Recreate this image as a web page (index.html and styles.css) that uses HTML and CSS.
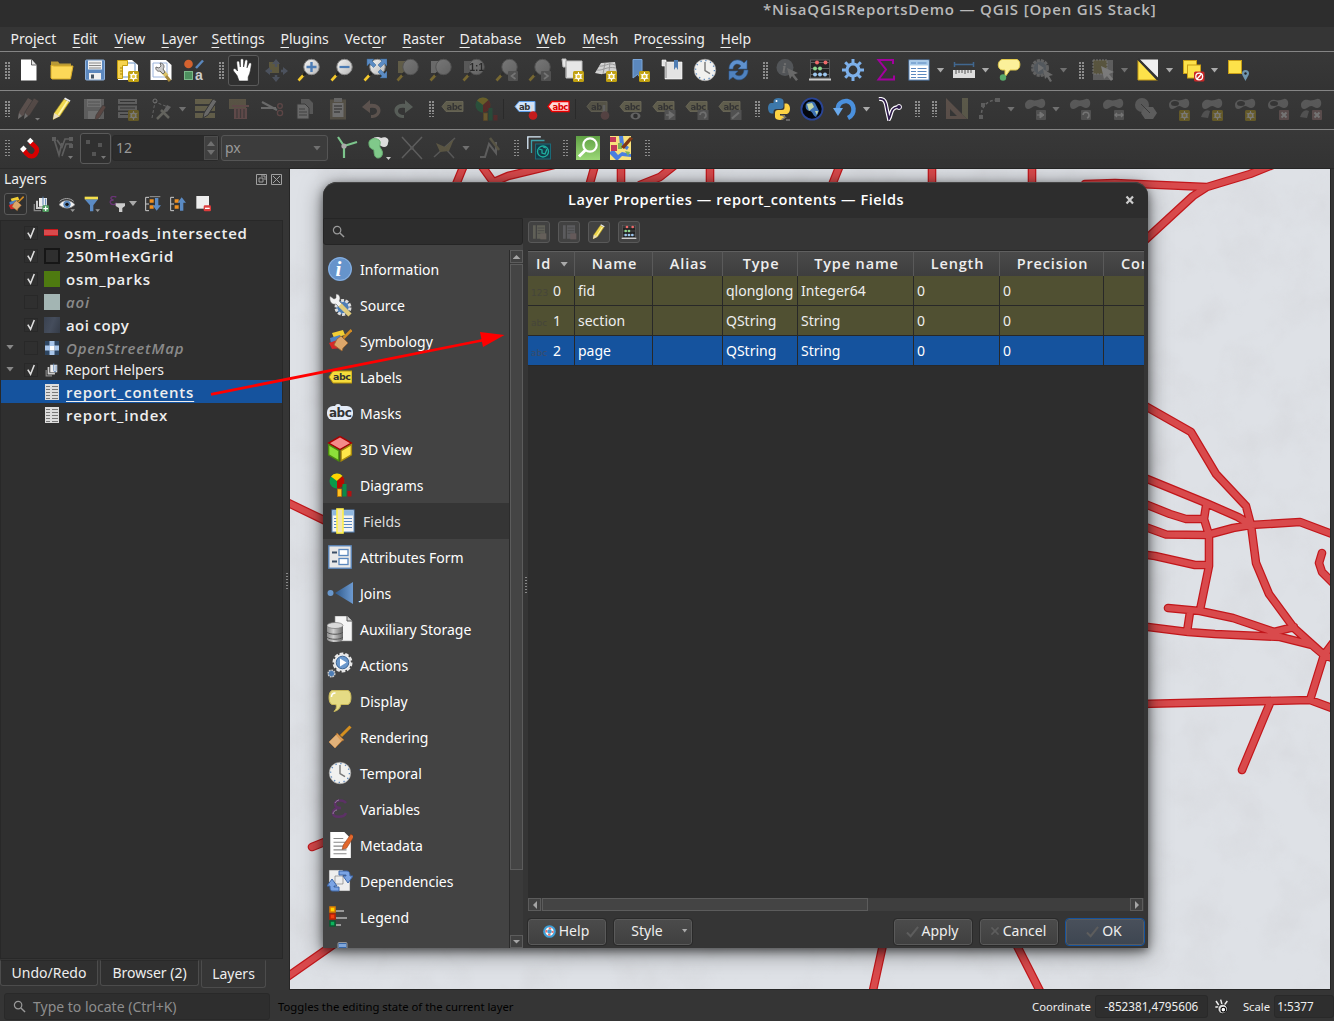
FILE: index.html
```html
<!DOCTYPE html>
<html lang="en">
<head>
<meta charset="utf-8">
<title>*NisaQGISReportsDemo — QGIS [Open GIS Stack]</title>
<link rel="stylesheet" href="styles.css">
</head>
<body>
<svg class="sprite" aria-hidden="true">
<defs>
<linearGradient id="gBall" x1="0" y1="0" x2="1" y2="1"><stop offset="0" stop-color="#f4f4f4"/><stop offset="1" stop-color="#b9b9b9"/></linearGradient>
<linearGradient id="gBlue" x1="0" y1="0" x2="1" y2="0"><stop offset="0" stop-color="#2f5a8c"/><stop offset="1" stop-color="#6d9ad0"/></linearGradient>
<linearGradient id="gDb" x1="0" y1="0" x2="1" y2="0"><stop offset="0" stop-color="#8b8b8b"/><stop offset=".4" stop-color="#cfcfcf"/><stop offset="1" stop-color="#666"/></linearGradient>
<linearGradient id="gGreen" x1="0" y1="0" x2="0" y2="1"><stop offset="0" stop-color="#5fa044"/><stop offset="1" stop-color="#9bd877"/></linearGradient>
<g id="star"><rect x="12" y="13" width="11" height="11" rx="1.5" fill="#c0a010"/><path d="M17.500 14v9M13.600 16.200l7.800 4.600M21.400 16.200l-7.800 4.600" stroke="#fff" stroke-width="1"/><circle cx="17.500" cy="18.500" r="2.400" fill="#e7c940" stroke="#fff" stroke-width="1.300"/></g>
<g id="lens"><path d="M1.500 22.500l5.500-6" stroke="#f5c92c" stroke-width="2.600"/><path d="M6 17.500l3-3" stroke="#222" stroke-width="2.600"/><circle cx="14.500" cy="9" r="7.700" fill="url(#gBall)" stroke="#8a8a8a"/></g>
<g id="tag"><path d="M1 9.500l4-5h17v10H5z" fill="#b0a878" stroke="#d8d0a0" stroke-width=".8"/><text x="5.500" y="12.800" font-size="8.500" class="abc">abc</text></g>
<g id="badge"><rect x="13" y="13" width="10" height="10" rx="1" fill="#888"/></g>
<g id="blob"><path d="M2 8c0-4 4-6 7-5s6 0 9-1 5 3 4 6-4 4-7 2-4-1-7 1-6 1-6-3z" fill="#9a9a9a"/></g>
</defs>
<symbol id="new" viewBox="0 0 24 24"><path d="M4 1.500h10.500l5 5.500v15.500H4z" fill="#fff"/><path d="M14.500 1.500v5.500h5" fill="#e2e2e2" stroke="#444" stroke-width=".8"/></symbol>
<symbol id="open" viewBox="0 0 24 24"><path d="M1 3.500h7l1.500 2H21V9H1z" fill="#b99a35"/><path d="M1 20V7l3 1h19l-2.500 13H2z" fill="#fcd858" stroke="#d9ad28"/></symbol>
<symbol id="save" viewBox="0 0 24 24"><rect x="2.500" y="2" width="19" height="20" rx="1" fill="#5c88be" stroke="#8fb0d8"/><rect x="5" y="2.500" width="14" height="9" fill="#f0f0f0"/><path d="M6 5h12M6 7.500h12M6 10h12" stroke="#888"/><rect x="6" y="15" width="12" height="6.500" fill="#f0f0f0"/><rect x="8" y="16.500" width="3" height="4" fill="#456"/></symbol>
<symbol id="layout" viewBox="0 0 24 24"><path d="M2 2h14l6 5v15H2z" fill="#fff"/><path d="M5 5h14v14H5z" fill="none" stroke="#6a93c5"/><path d="M1.500 2.500h10v5H6.500v13h-5z" fill="#f6d34f" stroke="#c39d10"/><path d="M4 10h2.500M4 13h2.500M4 16h2.500" stroke="#a88510"/><use href="#star"/></symbol>
<symbol id="manager" viewBox="0 0 24 24"><path d="M1.500 2H17l5.500 5v15h-21z" fill="#fff"/><path d="M4 5h14v14H4z" fill="none" stroke="#9ab3dc"/><path d="M12 12l6 6" stroke="#d9c168" stroke-width="4"/><path d="M7 9l3 1 2-2-1-3c4 0 5 4 3 6l2 3-2 2-3-3c-2 1-5-1-4-4z" fill="#ccc" stroke="#555" stroke-width=".8"/><path d="M17 18l4 5" stroke="#a7893a" stroke-width="3"/></symbol>
<symbol id="stylemgr" viewBox="0 0 24 24"><circle cx="6.500" cy="6" r="4.300" fill="#d4622f"/><path d="M14 10l7-7.500" stroke="#5b88be" stroke-width="2.500"/><rect x="2.500" y="13.500" width="8" height="8" fill="#4d8f5e" stroke="#7cb98a"/><text x="13" y="22" font-size="14" fill="#ccc" class="sans-b">a</text></symbol>
<symbol id="hand" viewBox="0 0 24 24"><path d="M8 23L6 17.500 2.500 13c-1.200-2 1-3.500 2.700-1.600L6.500 13 5.700 4.800c-.2-2.300 2.500-2.500 2.900-.2L9.300 9l.1-6.500c0-2.400 3.100-2.400 3.200 0V9l1.200-5.800c.5-2.200 3.100-1.700 2.900.4L16 9.800l1.700-4c.8-1.900 3.100-1.200 2.700.9-.6 3-.8 8-3.200 12.300V23z" fill="#fff" stroke="#222" stroke-width=".6"/></symbol>
<symbol id="panto" viewBox="0 0 24 24"><path d="M5 4h10v11H5z" fill="#a99a50"/><path d="M12 5v4M12 17v3M4 13h4M17 13h4" stroke="#78a" stroke-width="2.500"/><path d="M12 1l4 5H8zM12 24l4-5H8zM1 13l5-4v8zM24 13l-5-4v8z" fill="#78a"/></symbol>
<symbol id="zin" viewBox="0 0 24 24"><use href="#lens"/><path d="M14.500 4v10M9.500 9h10" stroke="#4c7cb5" stroke-width="2.400"/></symbol>
<symbol id="zout" viewBox="0 0 24 24"><use href="#lens"/><path d="M9.500 9h10" stroke="#4c7cb5" stroke-width="2.200"/></symbol>
<symbol id="zfull" viewBox="0 0 24 24"><use href="#lens"/><path d="M4 1h7L9 3l4 4-2.500 2.500-4-4L4 8zM24 1h-7l2 2-4 4 2.500 2.500 4-4L24 8zM24 20h-7l2-2-4-4 2.500-2.500 4 4L24 13z" fill="#5b8bc4" stroke="#35628f" stroke-width=".5"/></symbol>
<symbol id="zsel" viewBox="0 0 24 24"><rect x="2" y="3" width="10" height="12" fill="#b3a568"/><use href="#lens"/></symbol>
<symbol id="zlay" viewBox="0 0 24 24"><rect x="2" y="3" width="10" height="12" fill="#ccc"/><use href="#lens"/></symbol>
<symbol id="znat" viewBox="0 0 24 24"><rect x="2" y="3" width="12" height="12" fill="#999"/><use href="#lens"/><text x="7.500" y="12.500" font-size="10" class="sans-b" fill="#111">1:1</text></symbol>
<symbol id="zlast" viewBox="0 0 24 24"><use href="#lens"/><use href="#badge"/><path d="M20.500 15l-4 3 4 3" fill="none" stroke="#eee" stroke-width="1.600"/></symbol>
<symbol id="znext" viewBox="0 0 24 24"><use href="#lens"/><use href="#badge"/><path d="M16 15l4 3-4 3" fill="none" stroke="#eee" stroke-width="1.600"/></symbol>
<symbol id="map" viewBox="0 0 24 24"><path d="M1 1h4v2h16v17H5V9H2z" fill="#e6e6e6" stroke="#bcbcbc"/><path d="M5 3v16" stroke="#999"/><use href="#star"/></symbol>
<symbol id="map3d" viewBox="0 0 24 24"><path d="M1 15L7 5l14-1 2 11c-7-3-12 2-17 1z" fill="#d2d2d2"/><path d="M3 12c6 1 9-4 19-2M5 8c6 1 9-4 16-1M11 5L9 16M16 4l-1 10" stroke="#999" fill="none"/><use href="#star"/></symbol>
<symbol id="bmnew" viewBox="0 0 24 24"><path d="M6 1.500h9v20l-4.500-5L6 20z" fill="#5b88be" stroke="#7ba6da"/><use href="#star"/></symbol>
<symbol id="bm" viewBox="0 0 24 24"><path d="M2 2h4v2h16v17H5V8H2z" fill="#e3e3e3" stroke="#fff" stroke-width=".6"/><path d="M6 4v16" stroke="#888"/><path d="M14 2h4v10l-2-3-2 3z" fill="#4f7db3"/></symbol>
<symbol id="clock" viewBox="0 0 24 24"><circle cx="12" cy="12" r="10.800" fill="#f1f1ef" stroke="#999" stroke-width=".6"/><circle cx="12" cy="12" r="9.400" fill="none" stroke="#5b88be" stroke-width="1.300" stroke-dasharray="1.300 3.620"/><path d="M12 4v8.500l5 3.200" fill="none" stroke="#777" stroke-width="1.400"/></symbol>
<symbol id="refresh" viewBox="0 0 24 24"><path d="M3 11C3 2 13-1 18 5l3-3v9h-9l3-3c-4-4-8-1-8 3z" fill="#5f92cf" stroke="#2f5d93" stroke-width=".6"/><path d="M22 12c0 9-10 13-15 7l-4 3v-9h9l-3 3c4 4 9 1 9-4z" fill="#4f82bf" stroke="#2f5d93" stroke-width=".6"/></symbol>
<symbol id="ident" viewBox="0 0 24 24"><circle cx="10" cy="9.500" r="8.500" fill="#8a9199"/><text x="7" y="15" font-size="15" class="serif-bi" fill="#ddd">i</text><path d="M12 10l11 5-4 1.500 4 5-2 1.500-4-5-2 3z" fill="#ccc"/></symbol>
<symbol id="abacus" viewBox="0 0 24 24"><rect x="2.500" y="2" width="19" height="18" fill="#242424" stroke="#666" stroke-width=".8"/><path d="M1 21.500h22" stroke="#ccc" stroke-width="2"/><path d="M3 4.500h18M3 10.500h18M3 16.500h18" stroke="#999" stroke-width=".5"/><g fill="#f06a6a"><circle cx="9" cy="4.500" r="2"/><circle cx="17.500" cy="4.500" r="2"/></g><g fill="#8fd98f"><circle cx="7" cy="10.500" r="2"/><circle cx="12" cy="10.500" r="2"/></g><g fill="#9cc6ef"><circle cx="7" cy="16.500" r="2"/><circle cx="12" cy="16.500" r="2"/><circle cx="17" cy="16.500" r="2"/></g></symbol>
<symbol id="gear" viewBox="0 0 24 24"><path d="M12 1v22M1 12h22M4.200 4.200l15.600 15.600M19.800 4.200L4.200 19.800" stroke="#7db0ea" stroke-width="3"/><circle cx="12" cy="12" r="6" fill="#353535" stroke="#7db0ea" stroke-width="3.200"/></symbol>
<symbol id="sigma" viewBox="0 0 24 24"><path d="M19 6V2H4.500l7.500 9.500-7.500 10H20v-4" fill="none" stroke="#a3009f" stroke-width="2"/></symbol>
<symbol id="tbl" viewBox="0 0 24 24"><rect x="2" y="2" width="20" height="20" fill="#fff" stroke="#5b88be"/><rect x="2.500" y="2.500" width="19" height="5" fill="#a8cbea"/><path d="M4 5h5M10.500 5h9M4 10.500h5M10.500 10.500h9M4 13.500h5M10.500 13.500h9M4 16.500h5M10.500 16.500h9M4 19.500h5M10.500 19.500h9" stroke="#5b88be" stroke-width="1.100"/></symbol>
<symbol id="ruler" viewBox="0 0 24 24"><path d="M2 6.500h20M2.500 4v5M21.500 4v5" stroke="#41678f" stroke-width="1.500"/><rect x="1" y="12" width="22" height="8" fill="#ddd"/><path d="M4 12v4M7 12v3M10 12v3M13 12v4M16 12v3M19 12v3" stroke="#555"/></symbol>
<symbol id="tip" viewBox="0 0 24 24"><path d="M5 1.500h15c4 1 4 10-1 10.500h-6L8 19v-7H5C0 11 0 3 5 1.500z" fill="#fbf09a" stroke="#e0c94e"/><circle cx="6" cy="19.500" r="3.200" fill="#58a86a"/></symbol>
<symbol id="action" viewBox="0 0 24 24"><circle cx="10" cy="10" r="7.500" fill="#8b99a8" stroke="#b5b5b5" stroke-width="3" stroke-dasharray="3 1"/><path d="M8 6l6 4-6 4z" fill="#ddd"/><path d="M13 11l10 6-4 1 3 5-2 1-3-5-2 2z" fill="#ccc"/></symbol>
<symbol id="selrect" viewBox="0 0 24 24"><rect x="2" y="2" width="20" height="20" fill="#aaa"/><rect x="2" y="2" width="14" height="14" fill="#9a8f50" stroke="#eee" stroke-dasharray="2 1"/><path d="M10 8l13 6-5 2 4 5-2 2-4-5-3 3z" fill="#fff"/></symbol>
<symbol id="invert" viewBox="0 0 24 24"><path d="M2 2v20h20z" fill="#fde24a" stroke="#c89e16"/><path d="M4 1.500h18v18z" fill="#eee"/><path d="M2 1l20 21" stroke="#333" stroke-width="2"/></symbol>
<symbol id="desel" viewBox="0 0 24 24"><rect x="2.500" y="2.500" width="13" height="13" fill="#fde24a" stroke="#c89e16"/><rect x="6.500" y="7" width="13" height="13" fill="#fde24a" stroke="#c89e16"/><rect x="13" y="13.500" width="10.500" height="10" rx="1.500" fill="#c92626"/><circle cx="18.200" cy="18.500" r="3.400" fill="none" stroke="#fff" stroke-width="1.300"/><path d="M16 21l4.500-5" stroke="#fff" stroke-width="1.300"/></symbol>
<symbol id="selloc" viewBox="0 0 24 24"><rect x="2.500" y="2.500" width="13" height="13" fill="#fde24a" stroke="#c89e16"/><path d="M19.500 23c-2.500-5-3.500-6-3.500-7.500a3.500 3.500 0 0 1 7 0c0 1.500-1 2.500-3.500 7.500z" fill="#6f95ad"/><circle cx="19.500" cy="15.500" r="1.200" fill="#222"/></symbol>
<symbol id="pencil" viewBox="0 0 24 24"><path d="M3 22.500l1.200-6.500L14 2l5.500 3-9.500 14z" fill="#f0d84e" stroke="#8d7a20" stroke-width=".6"/><path d="M8.500 18L17.500 4" stroke="#fff6b0" stroke-width="1.500"/><path d="M3 22.500l1.200-6.500 5.500 3.200z" fill="#e8dcc0"/><path d="M14 2l1-1.500L20.500 3.500l-1 1.500z" fill="#eee"/></symbol>
<symbol id="pencils" viewBox="0 0 24 24"><path d="M1 22l1-7L11 1l5 3-9 14z" fill="#a08078"/><path d="M7 22l1-7L17 1l5 3-9 14z" fill="#8d6f66" stroke="#333" stroke-width=".6"/><path d="M1 22l1-6 3 3zM7 22l1-6 3 3z" fill="#ddd"/><path d="M18 21h5l-2.500 2.500z" fill="#fff"/></symbol>
<symbol id="saveed" viewBox="0 0 24 24"><path d="M1 2h20v20H1z" fill="#aaa"/><path d="M4 2h14v8H4zM5 14h12v8H5z" fill="#ddd"/><path d="M5 5h12M5 8h12" stroke="#888"/><path d="M12 23l1-5 7-10 3 2-7 11z" fill="#a0685c" stroke="#333" stroke-width=".5"/></symbol>
<symbol id="addrec" viewBox="0 0 24 24"><path d="M2 2h19v5H2zM2 8.500h19v5H2zM2 15h19v6H2z" fill="#aaa"/><path d="M4 4.500h15M4 11h15M4 17.500h15" stroke="#333"/><use href="#star"/></symbol>
<symbol id="vertex" viewBox="0 0 24 24"><path d="M3 21L6 5l13 5" fill="none" stroke="#bbb" stroke-dasharray="3 2"/><circle cx="6" cy="4" r="2" fill="none" stroke="#ddd"/><path d="M8 22l9-9M12 13l8 8" stroke="#bba" stroke-width="2.500"/><path d="M15 13l3-5 4 2-4 5z" fill="#bbb"/></symbol>
<symbol id="multiedit" viewBox="0 0 24 24"><path d="M1 2h20v5H1zM1 9h20v5H1zM1 16h20v5H1z" fill="#b7ab70"/><path d="M9 21l1-5L19 2l4 2-9 14z" fill="#ccc" stroke="#333"/></symbol>
<symbol id="del" viewBox="0 0 24 24"><path d="M2 2h17v10H2z" fill="#9a8a60"/><path d="M5 8h17v2H5zM7 11h13v11H7z" fill="#b07070"/><path d="M10 12v9M13.500 12v9M17 12v9" stroke="#544" stroke-width="1.300"/></symbol>
<symbol id="cut" viewBox="0 0 24 24"><path d="M2 5l15 8M1 11h15" stroke="#ccc" stroke-width="2"/><circle cx="20" cy="16" r="2.600" fill="none" stroke="#a66" stroke-width="1.300"/><circle cx="20" cy="9" r="2.300" fill="none" stroke="#a66" stroke-width="1.300"/></symbol>
<symbol id="copy" viewBox="0 0 24 24"><path d="M8 2h8l4 4v11H8z" fill="#999"/><path d="M4 7h8l4 4v11H4z" fill="#ccc" stroke="#444"/><path d="M6 12h6M6 15h8M6 18h8" stroke="#555"/></symbol>
<symbol id="paste" viewBox="0 0 24 24"><rect x="4" y="2.500" width="16" height="20" fill="#8d8064"/><path d="M6.500 6h11v14h-11z" fill="#ddd"/><rect x="8" y="1" width="8" height="4" fill="#bbb"/><path d="M8 9h8M8 12h8M8 15h6" stroke="#555" stroke-width="1.300"/></symbol>
<symbol id="undo" viewBox="0 0 24 24"><path d="M3 10l8-7v4c8-1 12 4 10 9-2 4-5 5-9 5v-3c4 0 6-2 6-4 0-3-3-4-7-3v5z" fill="#a58a7c"/></symbol>
<symbol id="redo" viewBox="0 0 24 24"><path d="M21 10l-8-7v4C5 6 1 11 3 16c2 4 5 5 9 5v-3c-4 0-6-2-6-4 0-3 3-4 7-3v5z" fill="#9aab9c"/></symbol>
<symbol id="tag0" viewBox="0 0 24 24"><use href="#tag"/></symbol>
<symbol id="diag" viewBox="0 0 24 24"><circle cx="9" cy="8" r="7.500" fill="#0a9a4a"/><path d="M9 8L3 3.500a7.500 7.500 0 0 1 11.500-.5z" fill="#ffd400"/><path d="M9 8l5.500-5c4 4 2 12-5.500 12.500z" fill="#b90c00"/><rect x="9.500" y="16" width="4" height="7.500" fill="#ffc020" stroke="#c07800" stroke-width=".7"/><rect x="14.500" y="11" width="4" height="12.500" fill="#0c8b47"/><rect x="19.500" y="18" width="4" height="5.500" fill="#b11212"/></symbol>
<symbol id="tagpin" viewBox="0 0 24 24"><path d="M1 9.500l4-5h16v10H5z" fill="#cfe3fb" stroke="#5b9be6"/><text x="5" y="12.800" font-size="8.500" class="abc">ab</text><path d="M18 8v9" stroke="#ddd" stroke-width="2.500"/><circle cx="19" cy="18.500" r="4.300" fill="#c41c1c"/></symbol>
<symbol id="tagpd" viewBox="0 0 24 24"><path d="M1 9.500l4-5h16v10H5z" fill="#b0a878" stroke="#d8d0a0"/><text x="5" y="12.800" font-size="8.500" class="abc">ab</text><path d="M18 8v9" stroke="#ddd" stroke-width="2.500"/><circle cx="19" cy="18.500" r="4.300" fill="#b06a6a"/></symbol>
<symbol id="tagred" viewBox="0 0 24 24"><path d="M1 9.500l4-5h17v10H5z" fill="#ffd9d9" stroke="#e00" stroke-width="1.300"/><text x="5.500" y="12.800" font-size="8.500" class="abc red">abc</text></symbol>
<symbol id="tagb" viewBox="0 0 24 24"><use href="#tag"/><ellipse cx="16.500" cy="19" rx="5" ry="3.500" fill="#bbb"/><circle cx="16.500" cy="19" r="2.300" fill="#222"/></symbol>
<symbol id="tagc" viewBox="0 0 24 24"><use href="#tag"/><rect x="12.500" y="13" width="11" height="10" fill="#888"/><path d="M14 18h5M17.500 15l4 3-4 3z" stroke="#ddd" stroke-width="1.500" fill="#ddd"/></symbol>
<symbol id="tagd" viewBox="0 0 24 24"><use href="#tag"/><rect x="12.500" y="13" width="11" height="10" fill="#888"/><path d="M19 21a3 3 0 1 0-4-3" fill="none" stroke="#ddd" stroke-width="1.600"/></symbol>
<symbol id="tage" viewBox="0 0 24 24"><use href="#tag"/><rect x="12.500" y="13" width="11" height="10" fill="#888"/><path d="M14 21.500l7-6" stroke="#ddd" stroke-width="2.200"/></symbol>
<symbol id="python" viewBox="0 0 24 24"><path d="M6.500 6V4c0-4 10-4 10 0v5c0 2-1 3-3 3h-4c-2 0-3 1-3 3v1.500H4c-4-1-4-10 0-10.500h8" fill="#3d78aa"/><path d="M17.500 6.500H20c4 1 4 9.500 0 10.500h-7v1.500h5V20c0 4-10 4-10 0v-4c0-2 1-3 3-3h4c2 0 2.500-1 2.500-3z" fill="#fdd344"/><circle cx="9.500" cy="4" r="1" fill="#fff"/><path d="M14.500 18l4 2.200-4 2.300M19 23h4" stroke="#777" stroke-width="1.300" fill="none"/></symbol>
<symbol id="globe" viewBox="0 0 24 24"><circle cx="12" cy="12" r="10.600" fill="#03060e" stroke="#2a4596" stroke-width="1.800"/><path d="M6 7c3-3 7-3 9-1l4 8-3 6c-3-1-3-5-6-6-4 0-5-4-4-7z" fill="#3f73b5"/><path d="M7 7l5-1 2 4-5 4zM15 14l3 0-1 4z" fill="#c5d7a8"/></symbol>
<symbol id="swirl" viewBox="0 0 24 24"><path d="M5 13C4 7 9 3.500 14 4c8 2 9 13 1 17" fill="none" stroke="#4a90dd" stroke-width="4.500"/><path d="M0 11h10l-5 8z" fill="#69a9ec"/></symbol>
<symbol id="vcurve" viewBox="0 0 24 24"><path d="M1 2c7-1 7 6 8 11l2 9c3-5 1-11 9-12" fill="none" stroke="#fff" stroke-width="4"/><circle cx="21" cy="10" r="2.500" fill="#2d1a4a" stroke="#fff"/><path d="M1 2c7-1 7 6 8 11l2 9c3-5 1-11 9-12" fill="none" stroke="#2d1a4a" stroke-width="1.700"/></symbol>
<symbol id="setsq" viewBox="0 0 24 24"><path d="M1 1v21h21zm4 11l7 7H5z" fill="#a08070" fill-rule="evenodd"/><path d="M17 1h6v21h-1l-5-5z" fill="#a09a70"/></symbol>
<symbol id="arc" viewBox="0 0 24 24"><path d="M3 21C3 9 9 3 20 3" fill="none" stroke="#bbb" stroke-width="1.500" stroke-dasharray="3 2"/><path d="M1 18h4v4H1zM3 6h4v4H3zM17 1h5v4h-5z" fill="#aaa"/></symbol>
<symbol id="bl1" viewBox="0 0 24 24"><use href="#blob"/><use href="#badge"/><path d="M14 18h4M17 15l4 3-4 3z" stroke="#eee" fill="#eee"/></symbol>
<symbol id="bl2" viewBox="0 0 24 24"><use href="#blob"/><use href="#badge"/><path d="M19 21a3 3 0 1 0-4-3" fill="none" stroke="#eee" stroke-width="1.500"/></symbol>
<symbol id="bl3" viewBox="0 0 24 24"><use href="#blob"/><use href="#badge"/><path d="M14 18h8M16 16l-2 2 2 2M20 16l2 2-2 2" fill="none" stroke="#eee" stroke-width="1.300"/></symbol>
<symbol id="bl4" viewBox="0 0 24 24"><circle cx="8" cy="8" r="7" fill="#999"/><path d="M11 10h8l4 6-4 6h-8l-4-6z" fill="#aaa"/><path d="M7 7l9 9" stroke="#444"/></symbol>
<symbol id="bl5" viewBox="0 0 24 24"><use href="#blob"/><ellipse cx="8" cy="6.500" rx="4" ry="2.500" fill="#353535"/><use href="#star"/></symbol>
<symbol id="bl6" viewBox="0 0 24 24"><use href="#blob"/><path d="M1 20c2-6 5-8 9-6l-2 7z" fill="#888"/><use href="#star"/></symbol>
<symbol id="bl7" viewBox="0 0 24 24"><use href="#blob"/><ellipse cx="8" cy="6.500" rx="4" ry="2.500" fill="#353535"/><rect x="13" y="13" width="10" height="10" rx="1" fill="#a07878"/><path d="M15.500 15.500l5 5M20.500 15.500l-5 5" stroke="#eee" stroke-width="2"/></symbol>
<symbol id="bl8" viewBox="0 0 24 24"><use href="#blob"/><path d="M1 20c2-6 5-8 9-6l-2 7z" fill="#888"/><rect x="13" y="13" width="10" height="10" rx="1" fill="#a07878"/><path d="M15.500 15.500l5 5M20.500 15.500l-5 5" stroke="#eee" stroke-width="2"/></symbol>
<symbol id="magnet" viewBox="0 0 24 24"><path d="M6 13l3.500 4.500c3 3.500 7 3.500 9 .500 2.500-3 1.500-6-1-8L13 6" fill="none" stroke="#d80000" stroke-width="4.600"/><path d="M3 13l3.500-3.500 3.200 3.200L6 16.500zM10 5l3.300-3.300 3.300 3.300-3.300 3.300z" fill="#fff"/></symbol>
<symbol id="snapv" viewBox="0 0 24 24"><path d="M4 3l5 16 3-12M7 4l5 7 3-8h7M12 20l4-12h6" fill="none" stroke="#aaa" stroke-width="1.700"/><path d="M2 1h4v4H2zM19 1h4v4h-4zM19 8h4v4h-4z" fill="#aaa"/><path d="M18 20h5l-2.500 3z" fill="#fff"/></symbol>
<symbol id="dots" viewBox="0 0 24 24"><path d="M3 4h4v4H3zM15 7h4v4h-4zM9 16h4v4H9z" fill="#999"/><path d="M18 20h5l-2.500 3z" fill="#fff"/></symbol>
<symbol id="topo" viewBox="0 0 24 24"><path d="M10 10L4 1M10 10L23 6M10 10v12" stroke="#7cc58c" stroke-width="2.200"/><circle cx="10" cy="10" r="2.600" fill="#aaa"/></symbol>
<symbol id="avoid" viewBox="0 0 24 24"><path d="M5 4c2-4 7-3 9-2 5-2 9 1 7 5 0 4-4 5-7 3z" fill="#ddd"/><path d="M2 8c-1-5 6-7 10-4 3 3-1 5 2 9 3 4 1 9-3 9-4 0-4-6-4-8-2-1-5-2-5-6z" fill="#80c98a" stroke="#6ab274"/><path d="M19 21h5l-2.500 3z" fill="#ccc"/></symbol>
<symbol id="cross" viewBox="0 0 24 24"><path d="M2 1l20 22M22 1L2 22" stroke="#aaa" stroke-width="1.500"/><circle cx="12" cy="12" r="1.800" fill="#999"/></symbol>
<symbol id="trace" viewBox="0 0 24 24"><path d="M1 21l11-10L22 2M12 12l9 10" stroke="#999" stroke-width="1.500"/><path d="M3 7l9 4 9-8-5 12-9 1z" fill="#a0925c"/></symbol>
<symbol id="trace2" viewBox="0 0 24 24"><path d="M2 21h5L11 8l7 9V6" fill="none" stroke="#aaa" stroke-width="2"/><path d="M12 2l9 12" stroke="#998f60" stroke-width="2.500"/></symbol>
<symbol id="layers3" viewBox="0 0 24 24"><path d="M.8 13V.8h13" fill="none" stroke="#dceefc" stroke-width="1.300"/><path d="M4.500 17V4.500h13" fill="none" stroke="#3b9fa8" stroke-width="1.300"/><rect x="8.500" y="8" width="15" height="15" fill="#153c48" stroke="#1a6a78"/><circle cx="16" cy="15.500" r="5.500" fill="none" stroke="#1fb0a0" stroke-width="1.300"/><path d="M12 13l3 1 0 3 3 1 2-5M16 11l3 1" stroke="#1fb0a0" fill="none" stroke-width="1.300"/></symbol>
<symbol id="osmfind" viewBox="0 0 24 24"><path d="M0 0h24v24H0z" fill="url(#gGreen)"/><circle cx="14" cy="9" r="6.700" fill="none" stroke="#fff" stroke-width="2.200"/><path d="M9.500 14L3 20.500" stroke="#fff" stroke-width="3"/></symbol>
<symbol id="osmedit" viewBox="0 0 24 24"><path d="M1 0h21v24H1z" fill="#f7e27c"/><path d="M1 16l3-3 5 6 4-3 9 2v3l-9-1-4 4H7l-6-6zM10 0h4l1 8 5 3-2 3-7-5z" fill="#4a7fe0"/><path d="M1 1h6v5H1zM2 9h6v6H2z" fill="#c23a5a"/><path d="M9 7h4v6H9zM16 15l5 1-2 4z" fill="#7fb35a"/><path d="M12 11l9-10 3 1.500L15 13z" fill="#7e3715"/></symbol>
<symbol id="info" viewBox="0 0 24 24"><circle cx="12" cy="12" r="12" fill="#6694cb"/><circle cx="12" cy="12" r="11.300" fill="none" stroke="#8db3e0"/><text x="7.500" y="19" font-size="21" class="serif-bi" fill="#fff">i</text></symbol>
<symbol id="source" viewBox="0 0 24 24"><circle cx="15" cy="14.500" r="7" fill="#4d7db5" stroke="#ddd" stroke-width="3" stroke-dasharray="3 1.400"/><path d="M2 3l4 3 2-1 0-4c4 0 5 5 3 7l4 4-3 3-4-4c-4 1-7-2-6-8z" fill="#f2f2f2" stroke="#555" stroke-width=".5"/><path d="M12 12l10 10" stroke="#e0cc7c" stroke-width="4.500"/></symbol>
<symbol id="brush" viewBox="0 0 24 24"><path d="M4 4l11-3 2 5-11 3z" fill="#f2cf35"/><path d="M2 9l10-3 2 5-11 4z" fill="#4c82c4"/><path d="M1 14l11-4 1 9-9 1z" fill="#d62828"/><path d="M9 10l4-3 7 7-5 5-1 3-8-6z" fill="#dca76b" stroke="#9a652e" stroke-width=".8"/><path d="M15.500 9L23.500 1" stroke="#d28b22" stroke-width="2.500"/></symbol>
<symbol id="lbl" viewBox="0 0 24 24"><path d="M1 12l4-6h19v12H5z" fill="#f5dc3c" stroke="#b8930d"/><text x="5" y="15" font-size="9.500" class="abc">abc</text></symbol>
<symbol id="mask" viewBox="0 0 26 24"><rect x="0" y="5" width="26" height="14" rx="6" fill="#e4ebf7"/><circle cx="11" cy="6" r="3" fill="#e4ebf7"/><text x="2" y="16" font-size="12" class="abc">abc</text></symbol>
<symbol id="cube" viewBox="0 0 24 24"><path d="M12 0l11 6.500v11L12 24 1 17.500v-11z" fill="#333"/><path d="M12 .5l10.500 6L12 12.500 1.500 6.500z" fill="#f58a8a" stroke="#a00" stroke-width="1.300"/><path d="M1.500 8L11 13.500v9.500l-9.500-5.500z" fill="#8de03a" stroke="#4c8a10" stroke-width="1.300"/><path d="M22.500 8L13 13.500v9.500l9.500-5.500z" fill="#ffe64a" stroke="#a8890d" stroke-width="1.300"/></symbol>
<symbol id="fields" viewBox="0 0 26 26"><rect x="2" y="2" width="22" height="22" fill="#f4f4f4" stroke="#5b88be"/><path d="M2.500 2.500h21v5h-21z" fill="#8fb8e0"/><path d="M4 10.500h18M4 13.500h18M4 16.500h18M4 19.500h18" stroke="#5b88be"/><rect x="7" y="1" width="6" height="24" fill="#efe4b8" stroke="#fff04a" stroke-width="1.600"/></symbol>
<symbol id="form" viewBox="0 0 24 24"><rect x=".8" y=".8" width="22.400" height="22.400" fill="#e8e8e8" stroke="#5b88be" stroke-width="1.300"/><path d="M4 7.500h5M4 16.500h5" stroke="#3c4f66" stroke-width="2"/><rect x="11" y="4.500" width="9" height="6" fill="#fff" stroke="#5b88be" stroke-width="1.300"/><rect x="11" y="13.500" width="9" height="6" fill="#fff" stroke="#5b88be" stroke-width="1.300"/></symbol>
<symbol id="join" viewBox="0 0 26 24"><circle cx="3.500" cy="12" r="3" fill="#6a98cc"/><path d="M8 12L26 1v22z" fill="url(#gBlue)"/></symbol>
<symbol id="aux" viewBox="0 0 26 26"><path d="M8 0h12l5 5v20H8z" fill="#f5f5f5" stroke="#888" stroke-width=".6"/><path d="M20 0v5h5" fill="#ccc" stroke="#555"/><path d="M0 10v13c0 4 16 4 16 0V10z" fill="url(#gDb)"/><ellipse cx="8" cy="9.500" rx="8" ry="3" fill="#dadada" stroke="#777" stroke-width=".7"/><path d="M0 16c2 3 14 3 16 0M0 21c2 3 14 3 16 0" fill="none" stroke="#555"/></symbol>
<symbol id="acts" viewBox="0 0 26 26"><circle cx="15.500" cy="10.500" r="8.500" fill="#f0f0f0" stroke="#e8e8e8" stroke-width="3" stroke-dasharray="3.500 1.800"/><circle cx="15.500" cy="10.500" r="6.300" fill="#6a98cc" stroke="#3c6494"/><path d="M13 6.500l6.500 4-6.500 4z" fill="#fff"/><circle cx="4.500" cy="21.500" r="3.300" fill="#4d7db5" stroke="#ccc" stroke-width="1.600" stroke-dasharray="1.700 .8"/></symbol>
<symbol id="disp" viewBox="0 0 24 24"><path d="M4 1.500h16c4 1 4 13 0 14h-7c-1 4-3 6-7 7 2-2 3-4 2-7H4c-4-1-4-13 0-14z" fill="#e5db84" stroke="#c9b95a"/><path d="M3.500 8c0-3 1-4 4-4" stroke="#fff" fill="none" stroke-width="1.500"/></symbol>
<symbol id="render" viewBox="0 0 24 24"><path d="M13 11l9.500-9.500" stroke="#d58f1f" stroke-width="3"/><path d="M9 8l7 7-2 1-7 7-6-6 7-7z" fill="#d89a54" stroke="#a5682a" stroke-width=".7"/><path d="M1 17l6 6 6-7-5-6z" fill="#e2b27a"/></symbol>
<symbol id="eps" viewBox="0 0 24 24"><path d="M18 6c-3-4-11-3-11 1 0 3 3 4 6 4-4 0-8 1-8 5 0 5 11 5 13 0" fill="none" stroke="#5c3166" stroke-width="2.500"/><path d="M7 6c1-2 3-3 4-3M5 17c0-2 2-4 4-4" stroke="#a391ab" fill="none" stroke-width=".8"/></symbol>
<symbol id="meta" viewBox="0 0 24 24"><path d="M3 0h13l6 6v18H3z" fill="#fff"/><path d="M6 6h9M6 9.500h12M6 13h12M6 16.500h12M6 20h12" stroke="#888"/><path d="M14 16l1-4 7-10 3 2-7 11z" fill="#e2672c" stroke="#8e3a12" stroke-width=".5"/></symbol>
<symbol id="deps" viewBox="0 0 26 24"><path d="M2 1h14v14H2zM8 7h15v15H8z" fill="#eee" stroke="#555" stroke-width=".5"/><path d="M12 2h8c2 0 3 2 3 5h3l-5 7-5-7h3V6h-7z" fill="#7ba4e4" stroke="#3f69ab"/><path d="M12 22H6c-3 0-3-2-3-5H0l5-7 5 7H7v1h5z" fill="#7ba4e4" stroke="#3f69ab"/></symbol>
<symbol id="legend" viewBox="0 0 24 24"><rect x="2" y="2" width="5" height="5" fill="#ffd400" stroke="#e08000" stroke-width="1.500"/><rect x="2" y="9" width="5" height="5" fill="#f04010" stroke="#c02000" stroke-width="1.500"/><rect x="2" y="16" width="5" height="5" fill="#0db35c" stroke="#0a5a30" stroke-width="1.500"/><path d="M8 6h8M8 13h11M8 20h5" stroke="#999" stroke-width="2"/></symbol>
<symbol id="server" viewBox="0 0 24 24"><rect x="10" y="1.500" width="9" height="20" rx="1" fill="#3666a6" stroke="#999"/><path d="M11 3h7v3h-7z" fill="#7fa6da"/></symbol>
<symbol id="grp" viewBox="0 0 24 24"><path d="M2 12v10h10" fill="none" stroke="#888" stroke-width="2"/><path d="M6 7v11h11" fill="none" stroke="#ccc" stroke-width="3"/><rect x="9" y="3" width="12" height="13" fill="#eee"/><path d="M15 1v12a2 2 0 0 0 4 0V4" stroke="#5a84b8" fill="none" stroke-width="1.500"/></symbol>
<symbol id="grpadd" viewBox="0 0 24 24"><path d="M2 12v10h10" fill="none" stroke="#888" stroke-width="2"/><path d="M6 7v11h11" fill="none" stroke="#ccc" stroke-width="3"/><rect x="9" y="3" width="12" height="13" fill="#eee"/><path d="M15 1v12a2 2 0 0 0 4 0V4" stroke="#5a84b8" fill="none" stroke-width="1.500"/><rect x="14" y="14" width="10" height="10" rx="2" fill="#4f9a5e"/><path d="M19 15.500v7M15.500 19h7" stroke="#fff" stroke-width="1.800"/></symbol>
<symbol id="eye" viewBox="0 0 24 24"><path d="M0 13C5 5 17 4 24 13 17 20 7 20 0 13z" fill="#f2f2f2" stroke="#777"/><circle cx="12" cy="12.500" r="5.500" fill="#5c88bc"/><circle cx="12" cy="12.500" r="2.500" fill="#111"/><path d="M1 8C6 3 16 2 22 8" fill="none" stroke="#aaa" stroke-width="1.500"/><path d="M17 20h7l-3.500 4z" fill="#999"/></symbol>
<symbol id="funnel" viewBox="0 0 24 24"><path d="M1 5h20l-7 9v9H9v-9z" fill="#5b8bc4"/><path d="M1 1h20v4H1z" fill="#f4df4c"/><path d="M17 20h7l-3.500 4z" fill="#999"/></symbol>
<symbol id="epsf" viewBox="0 0 24 24"><path d="M11 2C7-1 2 1 3 4c1 2 3 2 4 2-3 0-6 1-5 4 1 4 8 4 9 0" fill="none" stroke="#6a3576" stroke-width="2"/><path d="M10 11h14v4l-4 3v6h-5v-6l-5-3z" fill="#ccc"/></symbol>
<symbol id="expand" viewBox="0 0 24 24"><path d="M1 2h5M1 2v20h5M1 12h5" fill="none" stroke="#ccc" stroke-width="1.500"/><path d="M7 5h6v5H7zM7 14h6v5H7z" fill="#f09020"/><path d="M15 3h5v11h4l-6.500 8-6-8H15z" fill="#5b8bc4"/><path d="M7 1h16" stroke="#ccc"/></symbol>
<symbol id="collapse" viewBox="0 0 24 24"><path d="M1 2h5M1 2v20h5M1 12h5" fill="none" stroke="#ccc" stroke-width="1.500"/><path d="M7 5h6v5H7zM7 14h6v5H7z" fill="#f09020"/><path d="M15 22h5V10h4l-6.500-8-6 8H15z" fill="#5b8bc4"/></symbol>
<symbol id="rmlayer" viewBox="0 0 24 24"><rect x="2" y="0" width="19" height="19" fill="#eee"/><rect x="13" y="14" width="11" height="9" rx="2" fill="#dc3c3c"/><path d="M15 18.500h7" stroke="#fff" stroke-width="2"/></symbol>
<symbol id="gtbl" viewBox="0 0 14 16"><rect width="14" height="16" fill="#ddd"/><path d="M1 2.500h4M7 2.500h6M1 5.500h4M7 5.500h6M1 8.500h4M7 8.500h6M1 11.500h4M7 11.500h6M1 14.500h4M7 14.500h6" stroke="#777"/></symbol>
<symbol id="osm" viewBox="0 0 14 14"><path d="M0 0h14v14H0z" fill="#2f4763"/><path d="M4.500 0h5v5h-5zM0 4.500h5v5H0zM9.500 4.500h5v5h-5zM4.500 9.500h5V14h-5z" fill="#a9c6ea"/><path d="M5 5h4.500v4.500H5z" fill="#fff"/></symbol>
<symbol id="chk" viewBox="0 0 14 14"><path d="M3 6l3 5 4-10" fill="none" stroke="#ddd" stroke-width="1.700"/></symbol>
<symbol id="tick" viewBox="0 0 14 14"><path d="M1 8l4 4 8-10" fill="none" stroke="#5d5d5d" stroke-width="2.200"/></symbol>
<symbol id="glass" viewBox="0 0 14 14"><circle cx="5.500" cy="5.500" r="4" fill="none" stroke="#9a9a9a" stroke-width="1.300"/><path d="M8.500 8.500l4.500 4.500" stroke="#9a9a9a" stroke-width="1.500"/></symbol>
<symbol id="ring" viewBox="0 0 14 14"><circle cx="7" cy="7" r="6.800" fill="#3fa0d8"/><circle cx="7" cy="7" r="3.500" fill="none" stroke="#fff" stroke-width="2"/><circle cx="7" cy="7" r="3.500" fill="none" stroke="#e8706a" stroke-width="2" stroke-dasharray="2.750" stroke-dashoffset="1.300"/></symbol>
<symbol id="fnew" viewBox="0 0 24 24"><path d="M3 2h4v20H3zM9 2h12v20H9z" fill="#9a9a80"/><path d="M10 6h10M10 10h10M10 14h10" stroke="#444"/><rect x="14" y="14" width="9" height="9" fill="#a98"/></symbol>
<symbol id="fdel" viewBox="0 0 24 24"><path d="M3 2h4v20H3zM9 2h12v20H9z" fill="#8c8c94"/><path d="M10 6h10M10 10h10M10 14h10" stroke="#444"/><rect x="14" y="14" width="9" height="9" fill="#a88"/></symbol>
<symbol id="bug" viewBox="0 0 24 24"><path d="M3 3l4 6M10 1l2 7M2 12h5M20 3l-6 8" stroke="#eee" stroke-width="2.200"/><ellipse cx="13" cy="15" rx="7" ry="7" fill="#ddd" stroke="#000"/><circle cx="14" cy="16" r="3.500" fill="#fff" stroke="#000" stroke-width="1.600"/></symbol>
</svg>

<div class="window">
  <header class="titlebar"><span>*NisaQGISReportsDemo — QGIS [Open GIS Stack]</span></header>
  <nav class="menubar">
    <span class="m1">Pro<u>j</u>ect</span><span class="m2"><u>E</u>dit</span><span class="m3"><u>V</u>iew</span><span class="m4"><u>L</u>ayer</span><span class="m5"><u>S</u>ettings</span><span class="m6"><u>P</u>lugins</span><span class="m7">Vect<u>o</u>r</span><span class="m8"><u>R</u>aster</span><span class="m9"><u>D</u>atabase</span><span class="m10"><u>W</u>eb</span><span class="m11"><u>M</u>esh</span><span class="m12">Pro<u>c</u>essing</span><span class="m13"><u>H</u>elp</span>
  </nav>
  <div class="toolbar">
    <b class="grip first"></b>
    <svg class="i"><use href="#new"/></svg><svg class="i"><use href="#open"/></svg><svg class="i"><use href="#save"/></svg><svg class="i"><use href="#layout"/></svg><svg class="i"><use href="#manager"/></svg><svg class="i"><use href="#stylemgr"/></svg>
    <b class="grip"></b>
    <span class="pressed"><svg class="i"><use href="#hand"/></svg></span><svg class="i d"><use href="#panto"/></svg><svg class="i"><use href="#zin"/></svg><svg class="i"><use href="#zout"/></svg><svg class="i"><use href="#zfull"/></svg><svg class="i d"><use href="#zsel"/></svg><svg class="i d"><use href="#zlay"/></svg><svg class="i d"><use href="#znat"/></svg><svg class="i d"><use href="#zlast"/></svg><svg class="i d"><use href="#znext"/></svg><svg class="i"><use href="#map"/></svg><svg class="i"><use href="#map3d"/></svg><svg class="i"><use href="#bmnew"/></svg><svg class="i"><use href="#bm"/></svg><svg class="i"><use href="#clock"/></svg><svg class="i"><use href="#refresh"/></svg>
    <b class="grip"></b>
    <svg class="i d"><use href="#ident"/></svg><svg class="i"><use href="#abacus"/></svg><svg class="i"><use href="#gear"/></svg><svg class="i"><use href="#sigma"/></svg><svg class="i"><use href="#tbl"/></svg><b class="dd"></b><svg class="i"><use href="#ruler"/></svg><b class="dd"></b><svg class="i"><use href="#tip"/></svg><svg class="i d"><use href="#action"/></svg><b class="dd dim"></b>
    <b class="grip"></b>
    <svg class="i d"><use href="#selrect"/></svg><b class="dd dim"></b><svg class="i"><use href="#invert"/></svg><b class="dd"></b><svg class="i"><use href="#desel"/></svg><b class="dd"></b><svg class="i"><use href="#selloc"/></svg>
  </div>
  <div class="toolbar">
    <b class="grip first"></b>
    <svg class="i d"><use href="#pencils"/></svg><svg class="i"><use href="#pencil"/></svg><svg class="i d"><use href="#saveed"/></svg><svg class="i d"><use href="#addrec"/></svg><svg class="i d"><use href="#vertex"/></svg><b class="dd dim"></b><svg class="i d"><use href="#multiedit"/></svg><svg class="i d"><use href="#del"/></svg><svg class="i d"><use href="#cut"/></svg><svg class="i d"><use href="#copy"/></svg><svg class="i d"><use href="#paste"/></svg><svg class="i d"><use href="#undo"/></svg><svg class="i d"><use href="#redo"/></svg>
    <b class="grip"></b>
    <svg class="i d"><use href="#tag0"/></svg><svg class="i d2"><use href="#diag"/></svg><b class="sep"></b><svg class="i"><use href="#tagpin"/></svg><svg class="i"><use href="#tagred"/></svg><b class="sep"></b><svg class="i d2"><use href="#tagpd"/></svg><svg class="i d"><use href="#tagb"/></svg><svg class="i d"><use href="#tagc"/></svg><svg class="i d"><use href="#tagd"/></svg><svg class="i d"><use href="#tage"/></svg>
    <b class="grip"></b>
    <svg class="i"><use href="#python"/></svg><svg class="i"><use href="#globe"/></svg><svg class="i"><use href="#swirl"/></svg><b class="dd"></b><svg class="i"><use href="#vcurve"/></svg>
    <b class="grip"></b><b class="grip narrow"></b>
    <svg class="i d"><use href="#setsq"/></svg><svg class="i d"><use href="#arc"/></svg><b class="dd dim"></b><svg class="i d"><use href="#bl1"/></svg><b class="dd dim"></b><svg class="i d"><use href="#bl2"/></svg><svg class="i d"><use href="#bl3"/></svg><svg class="i d"><use href="#bl4"/></svg><svg class="i d"><use href="#bl5"/></svg><svg class="i d"><use href="#bl6"/></svg><svg class="i d"><use href="#bl5"/></svg><svg class="i d"><use href="#bl7"/></svg><svg class="i d"><use href="#bl8"/></svg>
  </div>
  <div class="toolbar">
    <b class="grip first"></b>
    <svg class="i"><use href="#magnet"/></svg><svg class="i d"><use href="#snapv"/></svg><span class="pressed"><svg class="i d"><use href="#dots"/></svg></span>
    <div class="spin"><span>12</span><b></b></div>
    <div class="combo"><span>px</span><b class="dd dim"></b></div>
    <svg class="i"><use href="#topo"/></svg><svg class="i"><use href="#avoid"/></svg><svg class="i d"><use href="#cross"/></svg><svg class="i d"><use href="#trace"/></svg><b class="dd dim"></b><svg class="i d"><use href="#trace2"/></svg>
    <b class="grip"></b><svg class="i"><use href="#layers3"/></svg><b class="grip"></b><svg class="i"><use href="#osmfind"/></svg><svg class="i"><use href="#osmedit"/></svg><b class="grip"></b>
  </div>

  <main class="work">
    <aside class="dock">
      <div class="dock-title"><span>Layers</span><svg width="26" height="12"><path d="M.5 1.500h10v10H.5zM3 5h4v4H3zM5 3h4v4M15.500 1.500h10v10h-10zM17 3l7 7M24 3l-7 7" fill="none" stroke="#a0a0a0"/></svg></div>
      <div class="dock-tools">
        <span class="pressed sm"><svg><use href="#brush"/></svg></span><svg class="s2"><use href="#grpadd"/></svg><svg class="s3"><use href="#eye"/></svg><svg class="s4"><use href="#funnel"/></svg><svg class="s5"><use href="#epsf"/></svg><b class="dd"></b><svg class="s6"><use href="#expand"/></svg><svg class="s7"><use href="#collapse"/></svg><svg class="s8"><use href="#rmlayer"/></svg>
      </div>
      <div class="tree">
        <div class="row"><i></i><span class="cb"><svg><use href="#chk"/></svg></span><em class="line"></em><span class="w">osm_roads_intersected</span></div>
        <div class="row"><i></i><span class="cb"><svg><use href="#chk"/></svg></span><em class="hex"></em><span class="w">250mHexGrid</span></div>
        <div class="row"><i></i><span class="cb"><svg><use href="#chk"/></svg></span><em class="park"></em><span class="w">osm_parks</span></div>
        <div class="row"><i></i><span class="cb"></span><em class="aoi"></em><span class="w off">aoi</span></div>
        <div class="row"><i></i><span class="cb"><svg><use href="#chk"/></svg></span><em class="aoi2"></em><span class="w copy">aoi copy</span></div>
        <div class="row"><i class="tri"></i><span class="cb"></span><svg class="osm"><use href="#osm"/></svg><span class="w off">OpenStreetMap</span></div>
        <div class="row group"><i class="tri"></i><span class="cb"><svg><use href="#chk"/></svg></span><svg class="osm grp"><use href="#grp"/></svg><span>Report Helpers</span></div>
        <div class="row sel"><svg class="gt"><use href="#gtbl"/></svg><span class="w e">report_contents</span></div>
        <div class="row"><svg class="gt"><use href="#gtbl"/></svg><span class="w e">report_index</span></div>
      </div>
      <div class="tabs"><span class="t1">Undo/Redo</span><span class="t2">Browser (2)</span><span class="t3">Layers</span></div>
    </aside>
    <div class="split"></div>
    <svg class="map" viewBox="290 169 1040 820">
      <defs><filter id="grain" x="0" y="0" width="100%" height="100%"><feTurbulence type="fractalNoise" baseFrequency=".022" numOctaves="5" seed="8"/><feColorMatrix values="0 0 0 0 .66  0 0 0 0 .67  0 0 0 0 .7  1.500 1.500 0 0 -1.350"/></filter>
        <path id="net" d="M1140 403L1191 432l25 42 30 32 5 19 5 38 13 31 25 34 30 27M1140 476l66 27 32 14 13 8M1140 502l30 12 16 5h18M1140 525l26 9.500 41 .5 26-7 18-3 49-3 40 15M1140 554l15 2 40 9h13M1206 506l-2 13 5 16v31l-9 44M1168 608l32 3 33 7 41 14 20-5M1140 626l48 6 27 2 65 3 32 8 12 10-14 45-170 4M1310 700l30 11M1270 703l-28 67M1322 553l-3 10 3 9 15 15M1190 612l-3 20M1324 655l12-16M1324 655l14 5M1085 184l30-1 92 4 43-13 25-10M1207 187l-14 9-50 46M280 499l50 24M312 847l20-8M280 982l60-42M884 940l-12 55M1014 940l28 55M455 187l9-22M499 190l-18-25M494 182l14-6 50-12M588 190l7-25M621 190v-30M640 185l20-8 15-12M710 190v-30M830 190l10-25M932 190v-30M1032 190v-30"/></defs>
      <rect x="290" y="169" width="1040" height="820" fill="#dee1e6"/>
      <rect x="290" y="169" width="1040" height="820" filter="url(#grain)" opacity=".5"/>
      <use href="#net" fill="none" stroke="#c2171b" stroke-width="8.600" stroke-linejoin="round" stroke-linecap="round"/>
      <use href="#net" fill="none" stroke="#d94a4c" stroke-width="6.200" stroke-linejoin="round" stroke-linecap="round"/>
    </svg>
  </main>

  <footer class="status">
    <div class="locator"><svg><use href="#glass"/></svg><span>Type to locate (Ctrl+K)</span></div>
    <span class="msg">Toggles the editing state of the current layer</span>
    <span class="lab">Coordinate</span><span class="box">-852381,4795606</span><svg class="bug"><use href="#bug"/></svg><span class="lab">Scale</span><span class="box scale">1:5377</span>
  </footer>
</div>

<section class="dialog">
  <div class="dtitle"><span>Layer Properties — report_contents — Fields</span><svg width="10" height="10"><path d="M1.500 1.500l6.500 7M8 1.500l-6.500 7" stroke="#ccc" stroke-width="2.200"/></svg></div>
  <div class="dbody">
    <div class="side">
      <div class="search"><svg><use href="#glass"/></svg></div>
      <div class="listwrap">
        <ul>
          <li><svg><use href="#info"/></svg>Information</li><li><svg><use href="#source"/></svg>Source</li><li><svg><use href="#brush"/></svg>Symbology</li><li><svg><use href="#lbl"/></svg>Labels</li><li><svg class="wide"><use href="#mask"/></svg>Masks</li><li><svg class="wide"><use href="#cube"/></svg>3D View</li><li><svg><use href="#diag"/></svg>Diagrams</li><li class="cur"><svg class="wide"><use href="#fields"/></svg>Fields</li><li><svg><use href="#form"/></svg>Attributes Form</li><li><svg class="wide"><use href="#join"/></svg>Joins</li><li><svg class="wide"><use href="#aux"/></svg>Auxiliary Storage</li><li><svg class="wide"><use href="#acts"/></svg>Actions</li><li><svg><use href="#disp"/></svg>Display</li><li><svg><use href="#render"/></svg>Rendering</li><li><svg><use href="#clock"/></svg>Temporal</li><li><svg><use href="#eps"/></svg>Variables</li><li><svg class="wide"><use href="#meta"/></svg>Metadata</li><li><svg class="wide"><use href="#deps"/></svg>Dependencies</li><li><svg><use href="#legend"/></svg>Legend</li><li><svg><use href="#server"/></svg></li>
        </ul>
        <div class="vbar"><b class="up"></b><b class="thumb"></b><b class="down"></b></div>
      </div>
    </div>
    <div class="split2"></div>
    <div class="pane">
      <div class="ptools"><span><svg class="d"><use href="#fnew"/></svg></span><span><svg class="d"><use href="#fdel"/></svg></span><span><svg><use href="#pencil"/></svg></span><span><svg><use href="#abacus"/></svg></span></div>
      <div class="grid">
        <div class="gr head"><span class="id">Id<b class="dd"></b></span><span>Name</span><span>Alias</span><span>Type</span><span>Type name</span><span>Length</span><span>Precision</span><span class="cm">Comment</span></div>
        <div class="gr"><span><small>123</small>0</span><span>fid</span><span></span><span>qlonglong</span><span>Integer64</span><span>0</span><span>0</span><span></span></div>
        <div class="gr"><span><small>abc</small>1</span><span>section</span><span></span><span>QString</span><span>String</span><span>0</span><span>0</span><span></span></div>
        <div class="gr blue"><span><small>abc</small>2</span><span>page</span><span></span><span>QString</span><span>String</span><span>0</span><span>0</span><span></span></div>
      </div>
      <div class="hbar"><b class="left"></b><b class="hthumb"></b><b class="right"></b></div>
      <div class="btns"><span class="btn"><svg><use href="#ring"/></svg>Help</span><span class="btn style">Style<b class="dd"></b></span><i></i><span class="btn"><svg><use href="#tick"/></svg>Apply</span><span class="btn"><svg class="x" viewBox="0 0 14 14"><path d="M2 2l10 10M12 2L2 12" stroke="#5d5d5d" stroke-width="2.200"/></svg>Cancel</span><span class="btn ok"><svg><use href="#tick"/></svg>OK</span></div>
    </div>
  </div>
</section>
<svg class="pointer" width="300" height="70" viewBox="208 328 300 70"><path d="M211 394.300L484 340" stroke="#f00" stroke-width="2.800"/><path d="M480 332l24.500 3L483 347z" fill="#f00"/></svg>
</body>
</html>
```
FILE: styles.css
```css
* { box-sizing: border-box; }
body { margin: 0; width: 1334px; height: 1021px; overflow: hidden; position: relative; background: #353535; color: #eee; font: 14px/20px "Noto Sans", "Open Sans", sans-serif; }
svg { display: block; flex: none; }
i, em, b { font-style: normal; flex: none; }
.sprite { position: absolute; width: 0; height: 0; visibility: hidden; }
.abc { font-family: "DejaVu Sans", sans-serif; font-weight: bold; letter-spacing: -.5px; fill: #333; }
.red { fill: #d00; }
.sans-b { font-family: "Liberation Sans", sans-serif; font-weight: bold; }
.serif-bi { font-family: "Liberation Serif", serif; font-weight: bold; font-style: italic; }

.window { display: flex; flex-direction: column; height: 1021px; }
.titlebar { height: 27px; background: #2d2d2d; padding: 0 0 8px 763px; color: #b9b9b9; font: 600 15px/18px "Open Sans", sans-serif; letter-spacing: .83px; white-space: nowrap; }
.menubar { height: 24px; display: flex; padding-left: 10.500px; line-height: 24px; white-space: nowrap; }
.menubar u { text-underline-offset: 3px; text-decoration-thickness: 1px; }
.m1 { width: 62px; } .m2 { width: 42px; } .m3 { width: 47px; } .m4 { width: 50px; } .m5 { width: 69px; } .m6 { width: 64px; } .m7 { width: 58px; } .m8 { width: 57px; } .m9 { width: 77px; } .m10 { width: 46px; } .m11 { width: 51px; } .m12 { width: 87px; }

.toolbar { height: 39px; border-top: 1px solid #858585; display: flex; align-items: center; overflow: hidden; background: linear-gradient(#383838, #333); flex: none; padding-bottom: 2px; }
.toolbar .i { width: 24px; height: 24px; margin: 0 4.500px; }
.d { opacity: .34; }
.d2 { opacity: .25; }
.grip { width: 16px; height: 17px; background: repeating-linear-gradient(#8c8c8c 0 1.500px, transparent 1.500px 3px) 8px 0 / 2px 17px no-repeat, repeating-linear-gradient(#8c8c8c 0 1.500px, transparent 1.500px 3px) 11px 0 / 2px 17px no-repeat; }
.grip.first { width: 12.500px; background-position: 5px 0, 8px 0; }
.grip.narrow { width: 17.500px; background-position: 9px 0, 12px 0; }
.dd { width: 12px; height: 5px; background: #aaa; clip-path: polygon(2px 0, 10px 0, 6px 5px); }
.toolbar .dd { clip-path: polygon(1px 0, 9px 0, 5px 5px); }
.dd.dim { background: #707070; }
.sep { width: 6.500px; height: 20px; border-left: 1px solid #2a2a2a; }
.pressed { width: 31px; height: 31px; margin: 0 1px; border: 1px solid #5a5a5a; border-radius: 3px; background: #303030; display: flex; align-items: center; justify-content: center; flex: none; }
.spin, .combo { height: 26px; border: 1px solid #292929; border-radius: 3px; color: #999; display: flex; align-items: center; justify-content: space-between; background: #2c2c2c; }
.spin { width: 107px; padding-left: 3px; margin-left: .5px; }
.spin b { width: 14px; height: 24px; border: 1px solid #4d4d4d; background: #404040; display: flex; flex-direction: column; align-items: center; justify-content: space-evenly; }
.spin b::before, .spin b::after { content: ""; width: 8px; height: 5px; background: #707070; clip-path: polygon(0 100%, 50% 0, 100% 100%); }
.spin b::after { transform: scaleY(-1); }
.combo { width: 107px; padding: 0 3px; margin: 0 1px 0 2px; background: #3c3c3c; border-color: #555; }

.work { display: flex; height: 822px; border-top: 1px solid #2a2a2a; flex: none; }
.dock { width: 284px; display: flex; flex-direction: column; }
.dock-title { height: 20px; padding: 0 2px 0 4px; display: flex; justify-content: space-between; align-items: center; }
.dock-title svg { margin-top: -1px; }
.dock-tools { height: 31px; display: flex; align-items: center; padding: 0 0 2px 4px; }
.dock-tools svg { width: 16px; height: 16px; }
.pressed.sm { width: 23px; height: 22px; margin: 0; }
.s2 { margin-left: 6px; } .s3 { margin-left: 10px; } .s4 { margin-left: 9px; } .s5 { margin: 0 2px 0 9px; } .s6 { margin-left: 6px; } .s7 { margin-left: 9px; } .s8 { margin-left: 9px; }
.tree { height: 739px; width: 283px; border: 1px solid #282828; background: #2f2f2f; }
.row { height: 23px; display: flex; align-items: center; }
.row.group { height: 21px; }
.row > i { width: 23px; height: 6px; }
.row > .tri::before { content: ""; display: block; width: 8px; height: 5px; margin-left: 5px; background: #888; clip-path: polygon(0 0, 100% 0, 50% 100%); }
.cb { width: 14px; height: 14px; border: 1px solid #282828; margin-right: 6px; flex: none; }
.cb svg { width: 13px; height: 13px; }
.row em { width: 16px; height: 16px; margin-right: 6px; }
.row .line { height: 7px; width: 14px; background: #d94a4c; border: 1px solid #c2171b; border-width: 1px 0; }
.hex { border: 2px solid #161616; } .park { background: #4e7a10; } .aoi { background: #a3b5b3; } .aoi2 { background: linear-gradient(110deg, #3a4250, #454d5c, #343b47); }
.osm { width: 14px; height: 14px; margin: 0 7px 0 1px; }
.osm.grp { margin-right: 6px; }
.gt { width: 14px; height: 16px; margin: 0 7px 0 44px; }
.w { font: 600 15px/20px "Open Sans", sans-serif; letter-spacing: .82px; white-space: nowrap; }
.copy { letter-spacing: .4px; }
.off { color: #8a8a8a; font-style: italic; }
.sel { background: #15539e; }
.sel .e { text-decoration: underline; text-underline-offset: 3px; text-decoration-skip-ink: none; text-decoration-thickness: 1px; }
.tabs { display: flex; align-items: flex-start; padding: 1px 0 0; gap: 2px; height: 30px; }
.tabs span { height: 26px; border: 1px solid #4c4c4c; border-top-color: #292929; border-radius: 0 0 3px 3px; background: #303030; text-align: center; line-height: 24px; white-space: nowrap; }
.t1 { width: 98px; } .t2 { width: 99px; } .tabs .t3 { width: 65px; height: 28px; line-height: 26px; background: #363636; border-top-color: #363636; }
.split { width: 6px; background: repeating-linear-gradient(#888 0 1px, transparent 1px 3px) 2px 404px / 2px 17px no-repeat; }
.map { width: 1040px; height: 820px; outline: 1px solid #262626; }

.status { height: 31px; display: flex; align-items: center; font-size: 11.300px; padding: 2px 0 0 4px; white-space: nowrap; flex: none; overflow: hidden; }
.status > * { flex: none; }
.locator { width: 266px; height: 27px; border: 1px solid #292929; border-radius: 3px; background: #2e2e2e; color: #8d8d8d; display: flex; align-items: center; padding-left: 8px; gap: 7px; font-size: 14px; }
.locator svg { width: 13px; height: 13px; }
.msg { color: #000; margin-left: 8px; width: 754px; }
.box { height: 23px; width: 113px; margin-left: 4px; border: 1px solid #292929; border-radius: 3px; background: #2e2e2e; text-align: center; line-height: 21px; font-size: 11.700px; }
.bug { width: 16px; height: 16px; margin: 0 13px 0 6px; }
.box.scale { width: 60px; text-align: left; padding-left: 2px; }

.dialog { position: absolute; left: 323px; top: 182px; width: 825px; height: 766px; border-radius: 14px 14px 0 0; background: #353535; box-shadow: 0 4px 22px rgba(0,0,0,.5), 0 3px 9px rgba(0,0,0,.45); }
.dtitle { height: 36px; background: #2d2d2d; border-radius: 14px 14px 0 0; border-top: 1px solid #454545; display: flex; align-items: center; justify-content: flex-end; padding: 0 13px 2px 0; font: 600 14.500px/20px "Open Sans", sans-serif; letter-spacing: .57px; color: #fff; white-space: nowrap; }
.dtitle span { width: 557px; }
.dbody { display: flex; height: 730px; }
.side { width: 200px; background: #434343; display: flex; flex-direction: column; }
.search { height: 27px; background: #2d2d2d; border: 1px solid #252525; border-radius: 0 0 3px 3px; padding: 6px 8px; }
.search svg { width: 13px; height: 13px; }
.listwrap { display: flex; height: 698px; margin-top: 5px; overflow: hidden; }
ul { margin: 0; padding: 1px 0 0; list-style: none; width: 186px; white-space: nowrap; }
li { height: 36px; display: flex; align-items: center; padding: 2px 0 0 5px; gap: 8px; color: #fff; }
li svg { width: 24px; height: 24px; margin-top: -2px; }
li .wide { width: 26px; height: 26px; margin: -2px -1px 0; }
.cur { background: #353535; padding-left: 8px; color: #ddd; }
.vbar { width: 14px; border-left: 1px solid #2b2b2b; background: #3a3a3a; display: flex; flex-direction: column; }
.up, .down, .left, .right { width: 13px; height: 13px; border: 1px solid #5c5c5c; background: #414141; display: grid; place-items: center; }
.up::before, .down::before, .left::before, .right::before { content: ""; width: 8px; height: 4px; background: #a5a5a5; clip-path: polygon(0 0, 100% 0, 50% 100%); }
.up::before { transform: scaleY(-1); } .left::before { transform: rotate(90deg); } .right::before { transform: rotate(-90deg); }
.thumb { height: 606px; margin: 1px 0 65px; border: 1px solid #5c5c5c; background: #444; }
.split2 { width: 5px; background: repeating-linear-gradient(#888 0 1px, transparent 1px 3px) 2px 359px / 2px 17px no-repeat; }
.pane { width: 616px; display: flex; flex-direction: column; }
.ptools { height: 32px; display: flex; gap: 8px; padding-top: 3px; }
.ptools span { width: 22px; height: 22px; border: 1px solid #595959; border-radius: 3px; background: #424242; display: grid; place-items: center; }
.ptools svg { width: 16px; height: 16px; }
.grid { height: 648px; background: #2d2d2d; overflow: hidden; border-top: 1px solid #282828; }
.gr { display: grid; grid-template-columns: 47px 78px 70px 75px 116px 86px 104px 60px; height: 30px; width: 636px; line-height: 29px; white-space: nowrap; }
.gr > span { background: #505032; border-right: 1px solid #282828; border-bottom: 1px solid #282828; padding-left: 3px; }
.gr.blue > span { background: #15539e; color: #fff; }
.gr.head { height: 25px; }
.gr.head > span { background: linear-gradient(#4a4a4a, #3e3e3e); border-right-color: #5a5a5a; border-top: 1px solid #606060; text-align: center; padding-left: 2px; font: 600 14.500px/24px "Open Sans", sans-serif; letter-spacing: .85px; }
.gr.head .id { display: flex; align-items: center; padding-left: 8px; gap: 7px; text-align: left; }
.gr.head .cm { text-align: left; padding-left: 17px; }
small { display: inline-block; width: 22px; font: 9px/20px "DejaVu Sans", sans-serif; color: #45453a; }
.blue small { color: #3b4c68; }
.hbar { height: 13px; display: flex; background: #3e3e3e; }
.hthumb { width: 326px; height: 13px; border: 1px solid #5c5c5c; background: #444; margin: 0 262px 0 1px; }
.btns { height: 27px; display: flex; gap: 8px; margin-top: 7px; align-items: center; }
.btns > i { flex: 1; }
.btn { width: 78px; height: 26px; border: 1px solid #5a5a5a; outline: 1px solid #2a2a2a; border-radius: 3px; background: linear-gradient(#4b4b4b, #404040); display: flex; align-items: center; justify-content: center; gap: 3px; padding: 0 2px 1px 0; }
.btn.style { padding-right: 0; }
.btn svg { width: 13px; height: 13px; }
.btn svg.x { width: 10px; height: 10px; }
.btn .dd { margin: 0 -16px 0 13px; clip-path: polygon(3px 0, 9px 0, 6px 4px); }
.btn.ok { background: linear-gradient(#49505b, #3e4651); outline-color: #15539e; }
.pointer { position: absolute; left: 208px; top: 328px; }
```
